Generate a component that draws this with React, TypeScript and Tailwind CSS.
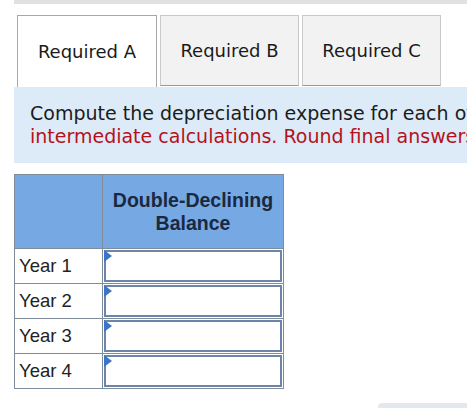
import React from "react";

const rows = ["Year 1", "Year 2", "Year 3", "Year 4"];

function Tab({ label, active }: { label: string; active?: boolean }) {
  return (
    <div
      className={
        active
          ? "w-[140px] h-[72px] bg-white border border-b-0 border-[#a8a8a8] flex items-center justify-center text-[18px] text-[#1a1a1a]"
          : "w-[139px] h-[71px] bg-[#f2f2f2] border border-[#c9c9c9] border-b-[#9a9a9a] flex items-center justify-center text-[18px] text-[#1a1a1a]"
      }
      style={{ fontFamily: '"DejaVu Sans", Verdana, sans-serif' }}
    >
      <span>{label}</span>
    </div>
  );
}

export default function App() {
  return (
    <div className="w-[467px] h-[408px] bg-white relative overflow-hidden">
      <div className="ml-[14px] h-[4px] bg-[#e1e1e1]" />
      <div className="mt-[11px] ml-[17px] flex items-start gap-[3px]">
        <Tab label="Required A" active />
        <Tab label="Required B" />
        <Tab label="Required C" />
      </div>
      <div
        className="ml-[14px] h-[76px] bg-[#dcebf7] pl-[16px] pt-[15px] whitespace-nowrap overflow-hidden text-[19px] leading-[23px]"
        style={{ fontFamily: '"DejaVu Sans", Verdana, sans-serif' }}
      >
        <div className="text-[#1b1b1b]">
          Compute the depreciation expense for each of the following years
        </div>
        <div className="text-[#b5121b]">
          intermediate calculations. Round final answers to the nearest dollar.
        </div>
      </div>
      <div
        className="ml-[14px] mt-[11px] w-[270px] border border-[#7f8c9c]"
        style={{ fontFamily: '"Liberation Sans", Arial, sans-serif' }}
      >
        <div className="flex h-[73px] bg-[#76a9e3]">
          <div className="w-[88px] border-r border-[#7f8c9c]" />
          <div className="flex-1 flex items-center justify-center text-center font-bold text-[19.5px] leading-[23px] text-[#1a2840]">
            <span>
              Double-Declining
              <br />
              Balance
            </span>
          </div>
        </div>
        {rows.map((r) => (
          <div
            key={r}
            className="flex h-[35px] border-t border-[#7f8c9c] bg-white"
          >
            <div className="w-[88px] border-r border-[#7f8c9c] pl-[4px] flex items-center text-[18.5px] text-[#222]">
              {r}
            </div>
            <div className="flex-1 relative p-[1px]">
              <div className="w-full h-full border-2 border-[#6d85a8] bg-white" />
              <div className="absolute left-[1px] top-[1px] w-0 h-0 border-t-[6px] border-b-[6px] border-l-[8px] border-t-transparent border-b-transparent border-l-[#3b76c4]" />
            </div>
          </div>
        ))}
      </div>
      <div className="absolute left-[378px] top-[403px] w-[100px] h-[10px] rounded-tl-[4px] bg-[#e3e8ef]" />
    </div>
  );
}
